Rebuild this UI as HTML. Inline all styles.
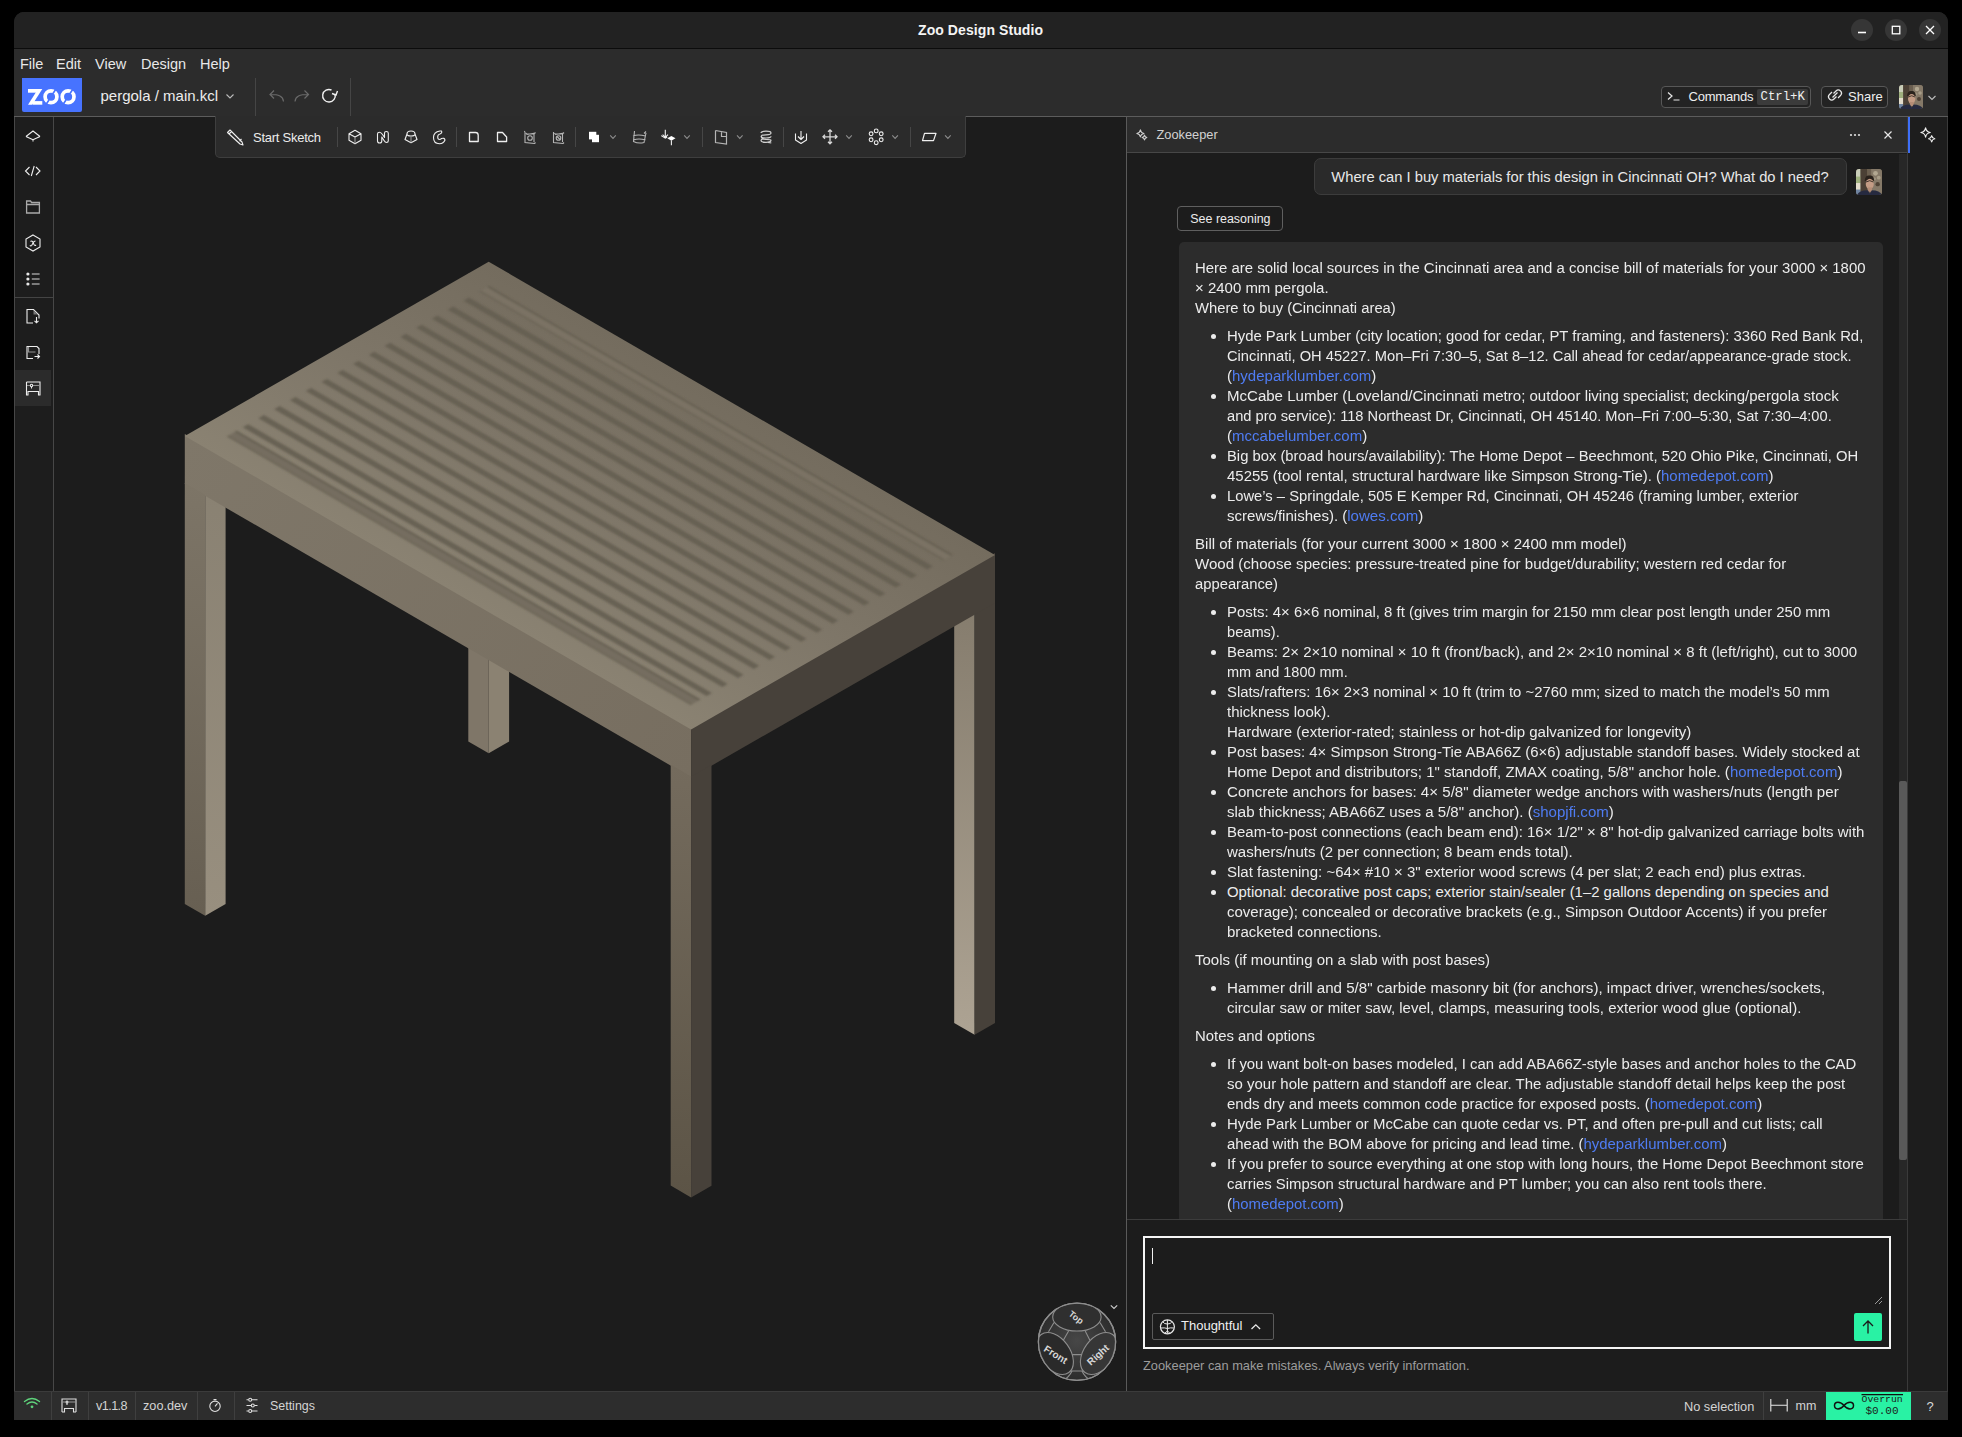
<!DOCTYPE html>
<html><head><meta charset="utf-8">
<style>
*{margin:0;padding:0;box-sizing:border-box}
html,body{width:1962px;height:1437px;background:#000;overflow:hidden;font-family:"Liberation Sans",sans-serif;color:#e6e6e6}
.a{position:absolute}
svg.a{overflow:visible}
.menu{position:absolute;top:56px;font-size:14.5px;color:#e8e8e8;line-height:16px}
.tdiv{position:absolute;background:#454545;width:1px}
.ic{position:absolute}
.st{position:absolute;top:1399px;font-size:13px;color:#d4d4d4;line-height:15px}
.sdiv{position:absolute;top:1392px;width:1px;height:28px;background:#3f3f3f}
.rt{position:absolute;left:1195px;font-size:14.9px;transform-origin:0 50%;line-height:20px;color:#ececec;white-space:nowrap}
.li{left:1227px}
.bul{position:absolute;left:1210.5px;width:5px;height:5px;border-radius:50%;background:#ececec}
.lk{color:#4f7cf3}
</style></head><body>

<!-- window base -->
<div class="a" style="left:14px;top:12px;width:1934px;height:1408px;background:#2c2c2c;border-radius:10px 10px 0 0"></div>
<div class="a" style="left:14px;top:12px;width:1934px;height:36px;background:#222222;border-radius:10px 10px 0 0"></div>
<div class="a" style="left:14px;top:47.5px;width:1934px;height:1.5px;background:#0c0c0c"></div>
<div class="a" style="left:918px;top:22px;font-size:14px;font-weight:bold;color:#f4f4f4;line-height:16px;letter-spacing:0.08px">Zoo Design Studio</div>
<div class="a" style="left:1851px;top:19px;width:22px;height:22px;border-radius:50%;background:#363636"></div>
<div class="a" style="left:1885px;top:19px;width:22px;height:22px;border-radius:50%;background:#363636"></div>
<div class="a" style="left:1919px;top:19px;width:22px;height:22px;border-radius:50%;background:#363636"></div>
<svg class="a" style="left:0;top:0" width="1962" height="60">
 <line x1="1858" y1="32.5" x2="1866" y2="32.5" stroke="#fff" stroke-width="1.6"/>
 <rect x="1892.3" y="26.3" width="7.5" height="7.5" fill="none" stroke="#fff" stroke-width="1.3"/>
 <path d="M1926 26 L1934 34 M1934 26 L1926 34" stroke="#fff" stroke-width="1.3"/>
</svg>
<!-- menus -->
<div class="menu" style="left:20px">File</div>
<div class="menu" style="left:56px">Edit</div>
<div class="menu" style="left:95px">View</div>
<div class="menu" style="left:141px">Design</div>
<div class="menu" style="left:200px">Help</div>
<!-- toolbar row -->
<svg class="a" style="left:22px;top:78px" width="60" height="34" viewBox="0 0 60 34">
 <path d="M0 0H60V32Q60 34 58 34H2Q0 34 0 32Z" fill="#4773ff"/>
 <path d="M6 11 H17 V14.7 H6 Z" fill="#fff"/><path d="M16 11 H20.3 L10.3 26.7 H6 Z" fill="#fff"/><path d="M10.8 23.1 H20.3 V26.7 H10.8 Z" fill="#fff"/>
 <circle cx="29" cy="18.8" r="5.9" fill="none" stroke="#fff" stroke-width="3.7"/>
 <circle cx="46.1" cy="18.8" r="5.9" fill="none" stroke="#fff" stroke-width="3.7"/>
 <path d="M34 11 L31 15.5 M24 26.5 L27 22 M51 11 L48 15.5 M41 26.5 L44 22" stroke="#4773ff" stroke-width="1.6"/>
</svg>
<div class="a" style="left:100.5px;top:87px;font-size:15px;color:#ececec;line-height:17px">pergola / main.kcl</div>
<svg class="a" style="left:0;top:60px" width="1962" height="60">
 <path d="M226.5 34.5 L230 38 L233.5 34.5" fill="none" stroke="#bbb" stroke-width="1.1"/>
 <path d="M283.5 41.5 C283 36 279 34.5 270 34.5 M274 30.5 L270 34.5 L274 38.5" fill="none" stroke="#6a6a6a" stroke-width="1.2"/>
 <path d="M295 41.5 C295.5 36 299.5 34.5 308.5 34.5 M304.5 30.5 L308.5 34.5 L304.5 38.5" fill="none" stroke="#6a6a6a" stroke-width="1.2"/>
 <path d="M335 34 A6.3 6.3 0 1 1 331.5 30" fill="none" stroke="#f0f0f0" stroke-width="1.4"/>
 <path d="M332 33.5 L336 35 L337.5 31" fill="none" stroke="#f0f0f0" stroke-width="1.4"/>
</svg>
<div class="tdiv" style="left:254.5px;top:78px;height:38px"></div>
<div class="tdiv" style="left:349.5px;top:78px;height:38px"></div>
<div class="a" style="left:14px;top:116px;width:1934px;height:1px;background:#5c5c5c"></div>
<!-- right top buttons -->
<div class="a" style="left:1661px;top:86px;width:150px;height:22px;border:1px solid #575757;border-radius:4px;background:#232323"></div>
<svg class="a" style="left:1660px;top:80px" width="30" height="30">
 <path d="M8 12.5 L12 16 L8 19.5 M13.5 20 H19.5" fill="none" stroke="#e8e8e8" stroke-width="1.2"/>
</svg>
<div class="a" style="left:1688.5px;top:89px;font-size:13px;color:#efefef;line-height:15px;letter-spacing:-0.2px">Commands</div>
<div class="a" style="left:1757px;top:89px;width:51px;height:16px;background:#3b3b3b;border-radius:2px"></div>
<div class="a" style="left:1760.5px;top:89.5px;font-family:'Liberation Mono',monospace;font-size:12.3px;color:#f0f0f0;line-height:15px">Ctrl+K</div>
<div class="a" style="left:1821px;top:86px;width:67px;height:22px;border:1px solid #575757;border-radius:4px;background:#232323"></div>
<svg class="a" style="left:1820px;top:80px" width="30" height="30">
 <path d="M13.5 13.5 L16 11 A3 3 0 0 1 20.5 15.5 L18 18 M16.5 16.5 L14 19 A3 3 0 0 1 9.5 14.5 L12 12 M12.5 17.5 L17.5 12.5" fill="none" stroke="#e8e8e8" stroke-width="1.2"/>
</svg>
<div class="a" style="left:1848px;top:89px;font-size:13px;color:#efefef;line-height:15px">Share</div>

<svg class="a" style="left:1899px;top:85px" width="24" height="24" viewBox="0 0 24 24"><defs><clipPath id="avc0"><rect x="0" y="0" width="24" height="24" rx="3"/></clipPath><filter id="avb0" x="-10%" y="-10%" width="120%" height="120%"><feGaussianBlur stdDeviation="0.55"/></filter></defs><g clip-path="url(#avc0)"><rect width="24" height="24" fill="#6b5f50"/><g filter="url(#avb0)"><rect x="0" y="0" width="4.2" height="24" fill="#c9cdb8"/><rect x="0" y="7" width="4.2" height="6" fill="#9fb07e"/><rect x="0" y="13" width="4.2" height="6" fill="#e3dccb"/><rect x="0" y="19" width="4.2" height="5" fill="#6f84a0"/><rect x="4.2" y="0" width="6" height="24" fill="#4b4034"/><rect x="14" y="0" width="10" height="24" fill="#857967"/><circle cx="18" cy="4" r="2.2" fill="#b2a791"/><circle cx="21" cy="8" r="1.8" fill="#a89d88"/><circle cx="17" cy="9" r="1.5" fill="#9c917d"/><circle cx="20" cy="14" r="2" fill="#4f4336"/><path d="M8 11 Q8.5 5.5 12.5 6 Q16.5 5.5 16.8 11 Z" fill="#2a221c"/><ellipse cx="12.7" cy="13.8" rx="3.7" ry="4.8" fill="#c49c85"/><path d="M9.3 12 Q12.7 9.5 16 12" fill="none" stroke="#2a221c" stroke-width="0.8"/><rect x="11" y="17" width="3.8" height="4" fill="#b48c76"/><path d="M1 24 Q2.5 19.5 11 19.5 L12.8 22.5 L14.6 19.5 Q22 19.5 24 24 Z" fill="#262c40"/></g></g>
</svg>
<svg class="a" style="left:1920px;top:85px" width="24" height="24"><path d="M8.5 11 L12 14.5 L15.5 11" fill="none" stroke="#bdbdbd" stroke-width="1.1"/></svg>

<!-- main area backgrounds -->
<div class="a" style="left:14px;top:117px;width:39px;height:1274px;background:#1d1d1d;border-left:1px solid #474747"></div>
<div class="a" style="left:53px;top:117px;width:1px;height:1274px;background:#474747"></div>
<div class="a" style="left:54px;top:117px;width:1072px;height:1274px;background:#1c1c1c"></div>
<div class="a" style="left:15px;top:296.5px;width:38px;height:1px;background:#444"></div>
<div class="a" style="left:15px;top:369.5px;width:36px;height:36px;background:#2b2b2b"></div>
<svg class="a" style="left:0;top:0" width="60" height="420">
 <g fill="none" stroke="#ededed" stroke-width="1.1">
  <path d="M26 136.5 L33 131 L40 136.5 M26 136.5 Q29 138 33 139.8 Q37 138 40 136.5 M33 139.8 V141.5"/>
  <path d="M29.5 167 L25.5 171 L29.5 175 M36 167 L40 171 L36 175 M34.2 166 L31.3 176"/>
  <path d="M27 228.5" />
  <path d="M33 235 L40 239 V247 L33 251 L26 247 V239 Z"/>
  <path d="M30.5 241.5 Q31.5 240.5 32.5 241.5 L34 244.5 Q35 246 36 245 M35.5 241 Q34 241 33 243 L31.8 245.2 Q31 246.3 29.8 245.6"/>
 </g>
 <path d="M26.6 201 H30.5 L31.6 202.5 H39.4 V213 H26.6 Z M26.6 204.5 H39.4" fill="none" stroke="#a9a9a9" stroke-width="1.3"/>
 <g fill="#e8e8e8"><circle cx="27.9" cy="274" r="1.6"/><circle cx="27.9" cy="279" r="1.6"/><circle cx="27.9" cy="284" r="1.6"/></g>
 <g stroke="#9a9a9a" stroke-width="1.3"><path d="M31.8 274H39.6M31.8 279H39.6M31.8 284H39.6"/></g>
 <g fill="none" stroke="#ededed" stroke-width="1.1">
  <path d="M33 323 H27 V309.5 H33.5 L39 315 V318.5"/>
  <path d="M36.5 317 V322.8 M34.5 320.8 L36.5 322.8 L38.5 320.8"/>
  <path d="M33 358.5 H27 V346.5 H37 L39 348.5 V354"/>
  <path d="M34.5 356.5 H39.5 M37.5 354.5 L39.5 356.5 L37.5 358.5"/>
  <path d="M26.5 382 H40 V395 M26.5 382 V395 M28 395 V391.5 H38.5 V395 M26 395 H28.5 M38 395 H40.5"/>
  <circle cx="31.5" cy="385.5" r="1.2"/><path d="M31.5 386.7 V388.5"/>
 </g>
 <path d="M28.5 347 V352 H35.5" fill="none" stroke="#8f8f8f" stroke-width="1.2"/>
 <path d="M33.5 310 L38 314.5 H33.5 Z" fill="#777"/>
 <path d="M27 385.5 H30 M33 385.5 H39.5" stroke="#8f8f8f" stroke-width="1.2"/>
</svg>
<!-- panel bg -->
<div class="a" style="left:1126px;top:117px;width:1px;height:1274px;background:#5a5a5a"></div>
<div class="a" style="left:1127px;top:117px;width:780px;height:1274px;background:#1c1c1c"></div>
<div class="a" style="left:1907px;top:117px;width:1px;height:1274px;background:#3a3a3a"></div>
<div class="a" style="left:1908px;top:117px;width:39px;height:1274px;background:#1d1d1d"></div>
<div class="a" style="left:1946.5px;top:117px;width:1px;height:1274px;background:#3a3a3a"></div>
<div class="a" style="left:1908px;top:117px;width:2.2px;height:36px;background:#3e6ff7"></div>
<svg class="a" style="left:1908px;top:117px" width="40" height="40"><g fill="none" stroke="#f0f0f0" stroke-width="1.15" stroke-linejoin="round"><path d="M17.60 10.80 Q18.26 14.84 22.30 15.50 Q18.26 16.16 17.60 20.20 Q16.94 16.16 12.90 15.50 Q16.94 14.84 17.60 10.80 Z"/><path d="M23.70 18.70 Q24.20 21.30 26.80 21.80 Q24.20 22.30 23.70 24.90 Q23.20 22.30 20.60 21.80 Q23.20 21.30 23.70 18.70 Z"/></g></svg>

<!-- viewport -->

<svg class="a" style="left:0;top:0" width="1962" height="1437" viewBox="0 0 1962 1437"><defs><linearGradient id="gtop" gradientUnits="userSpaceOnUse" x1="438" y1="583" x2="590" y2="320"><stop offset="0" stop-color="#8a8272"/><stop offset="0.5" stop-color="#7e7668"/><stop offset="1" stop-color="#746c5e"/></linearGradient><linearGradient id="glf" gradientUnits="userSpaceOnUse" x1="185" y1="436" x2="691" y2="778"><stop offset="0" stop-color="#7f7769"/><stop offset="1" stop-color="#776e60"/></linearGradient><linearGradient id="glpost" gradientUnits="userSpaceOnUse" x1="0" y1="484" x2="0" y2="916"><stop offset="0" stop-color="#7d7567"/><stop offset="1" stop-color="#675f52"/></linearGradient><linearGradient id="glpost2" gradientUnits="userSpaceOnUse" x1="0" y1="480" x2="0" y2="916"><stop offset="0" stop-color="#898172"/><stop offset="1" stop-color="#988f7f"/></linearGradient><linearGradient id="gfpost" gradientUnits="userSpaceOnUse" x1="0" y1="766" x2="0" y2="1198"><stop offset="0" stop-color="#746b5d"/><stop offset="1" stop-color="#5c5446"/></linearGradient><linearGradient id="grpost" gradientUnits="userSpaceOnUse" x1="0" y1="615" x2="0" y2="1035"><stop offset="0" stop-color="#867d6e"/><stop offset="1" stop-color="#ada393"/></linearGradient><filter id="blur1" x="-5%" y="-5%" width="110%" height="110%"><feGaussianBlur stdDeviation="1.25"/></filter></defs><polygon points="468.3,273.4 488.7,285.2 488.7,753.2 468.3,741.4" fill="#7f7668"/><polygon points="488.7,285.2 509.1,273.5 509.1,741.5 488.7,753.2" fill="#8b8272"/><polygon points="954.2,555.0 974.6,566.8 974.6,1034.8 954.2,1023.0" fill="url(#grpost)"/><polygon points="974.6,566.8 995.0,555.1 995.0,1023.1 974.6,1034.8" fill="#47413a"/><polygon points="205.2,447.8 225.6,436.1 225.6,904.1 205.2,915.8" fill="url(#glpost2)"/><polygon points="184.8,434.0 691.1,727.4 691.1,777.4 184.8,484.0" fill="url(#glf)"/><polygon points="691.1,727.4 995.0,553.1 995.0,603.1 691.1,777.4" fill="#47413a"/><polygon points="184.8,483.0 205.2,494.8 205.2,915.8 184.8,904.0" fill="url(#glpost)"/><polygon points="670.7,764.6 691.1,776.4 691.1,1197.4 670.7,1185.6" fill="url(#gfpost)"/><polygon points="691.1,776.4 711.5,764.7 711.5,1185.7 691.1,1197.4" fill="#47413a"/><polygon points="184.8,436.0 691.1,729.4 995.0,555.1 488.7,261.7" fill="url(#gtop)"/><g filter="url(#blur1)" opacity="0.9"><polygon points="226.9,436.4 690.7,705.1 700.4,699.5 236.6,430.8" fill="#736c5e"/><polygon points="234.8,431.8 698.6,700.6 700.4,699.5 236.6,430.8" fill="#625b4e"/><polygon points="226.9,436.4 690.7,705.1 692.2,704.2 228.4,435.5" fill="#6a6355"/><polygon points="242.7,427.3 706.5,696.1 711.9,692.9 248.2,424.2" fill="#655e51"/><polygon points="258.5,418.3 722.2,687.0 727.7,683.9 263.9,415.1" fill="#655e51"/><polygon points="274.2,409.2 738.0,678.0 743.5,674.8 279.7,406.1" fill="#655e51"/><polygon points="290.0,400.2 753.8,668.9 759.2,665.8 295.5,397.0" fill="#655e51"/><polygon points="305.8,391.1 769.5,659.9 775.0,656.8 311.2,388.0" fill="#655e51"/><polygon points="321.5,382.1 785.3,650.8 790.8,647.7 327.0,379.0" fill="#655e51"/><polygon points="337.3,373.0 801.1,641.8 806.6,638.7 342.8,369.9" fill="#655e51"/><polygon points="353.1,364.0 816.9,632.8 822.3,629.6 358.6,360.9" fill="#655e51"/><polygon points="368.9,355.0 832.6,623.7 838.1,620.6 374.3,351.8" fill="#655e51"/><polygon points="384.6,345.9 848.4,614.7 853.9,611.5 390.1,342.8" fill="#655e51"/><polygon points="400.4,336.9 864.2,605.6 869.6,602.5 405.9,333.7" fill="#655e51"/><polygon points="416.2,327.8 880.0,596.6 885.4,593.4 421.7,324.7" fill="#655e51"/><polygon points="432.0,318.8 895.7,587.5 901.2,584.4 437.4,315.6" fill="#655e51"/><polygon points="447.7,309.7 911.5,578.5 917.0,575.3 453.2,306.6" fill="#655e51"/><polygon points="463.5,300.7 927.3,569.4 932.7,566.3 469.0,297.5" fill="#655e51"/><polygon points="479.3,291.6 943.0,560.4 952.8,554.8 489.0,286.0" fill="#7b7365"/><polygon points="487.2,287.1 950.9,555.8 952.8,554.8 489.0,286.0" fill="#625b4e"/><polygon points="479.3,291.6 943.0,560.4 944.6,559.5 480.8,290.8" fill="#6a6355"/></g></svg>
<!-- floating toolbar -->
<div class="a" style="left:215px;top:116px;width:751px;height:42px;background:#2b2b2b;border:1px solid #3e3e3e;border-top:none;border-radius:0 0 5px 5px"></div>
<div class="a" style="left:253px;top:129.5px;font-size:13px;color:#ececec;line-height:15px;letter-spacing:-0.25px">Start Sketch</div>
<div class="tdiv" style="left:337px;top:127px;height:20px;background:#464646"></div>
<div class="tdiv" style="left:456px;top:127px;height:20px;background:#464646"></div>
<div class="tdiv" style="left:575px;top:127px;height:20px;background:#464646"></div>
<div class="tdiv" style="left:702px;top:127px;height:20px;background:#464646"></div>
<div class="tdiv" style="left:783px;top:127px;height:20px;background:#464646"></div>
<div class="tdiv" style="left:910px;top:127px;height:20px;background:#464646"></div>
<svg class="a" style="left:0;top:0" width="970" height="160">
 <g fill="none" stroke="#efefef" stroke-width="1.1" stroke-linejoin="round">
  <!-- pencil -->
  <path d="M227.5 132.5 L230 130 L242 142 L243 145 L240 144 Z M229 134 L231.5 131.5 M239.5 141 L241.5 139"/>
  <!-- extrude cube -->
  <path d="M355 130.3 L361 133.7 V140.3 L355 143.7 L349 140.3 V133.7 Z M349 133.7 L355 137 L361 133.7"/>
  <!-- sweep -->
  <path d="M377.5 134 Q377.5 132.2 379.5 132.2 Q381 132.2 382.5 134.5 L384.5 137.5 V133 Q384.5 131.5 386.3 131.5 Q388.3 131.5 388.3 133.2 V140.8 Q388.3 142.5 386.5 142.5 Q385.2 142.5 384 140.5 L381.8 137 V141 Q381.8 143 379.7 143 Q377.5 143 377.5 141 Z"/>
  <!-- loft -->
  <path d="M407 134 Q407 131 411 131 Q415 131 415 134 L417 139.5 L411 142.8 L405 139.5 Z M407 134 Q407 136 411 136 Q415 136 415 134"/>
  <!-- revolve -->
  <path d="M440 131 Q433.5 132 433.5 137.5 Q433.5 143.7 439.5 143.7 Q443.5 143.7 445 140 Q444.5 137.5 441.5 138.5 Q440.5 139.5 439.5 139.5 Q437.7 139.5 437.7 137 Q437.7 134.5 440 134 Q442.5 133 441.5 131 Z"/>
  <!-- fillet -->
  <path d="M469.5 132.5 H475.5 Q478.2 132.5 478.2 135.2 V141.5 H469.5 Z" stroke-width="1.3"/>
  <!-- chamfer -->
  <path d="M497.5 132.5 H502.5 L506.6 137 V141.5 H497.5 Z" stroke-width="1.3"/>
  <!-- insert -->
  <path d="M795.5 133.5 V140 L801 143.5 L806.5 140 V133.5 M801 131 V139 M798 136.5 L801 139.5 L804 136.5"/>
  <!-- parallelogram -->
  <path d="M924.5 133.3 H936 L933.5 140.6 H922.5 Z" stroke-width="1.2"/>
 </g>
 <g fill="none" stroke="#b5b5b5" stroke-width="1.1">
  <path d="M355 137 V143.5" stroke="#9a9a9a"/>
  <path d="M411 136 V142.5" stroke="#9a9a9a"/>
  <!-- shell -->
  <path d="M525 132 V142.5 L534.5 143.5 M525 132 L524.3 131 M534.5 143.5 L535.5 142.5 M526.5 134 H534 V142 M526 133 L527 134.5 L535.5 133 M535.5 132.5 L534 134"/>
  <circle cx="530" cy="138" r="2.3"/>
  <!-- hole -->
  <path d="M553.5 132 V142.5 L563 143.5 M563 143.5 L564 142.5 M555 134 H562.5 V142 M554.5 133 L555.5 134.5 L564 133 M564 132.5 L562.5 134"/>
  <circle cx="558.5" cy="138" r="2.3"/><path d="M557 136.5 L560 139.5"/>
  <!-- offset plane -->
  <path d="M633 136 Q638 134 645.5 136 M633.5 140 Q638.5 138 645.5 140 M634.5 131 L633.5 141.5 Q638.5 144 644 142.5 L646 133 M644 133.5 L646 131.5"/>
  <!-- sweep2 -->
  <path d="M715.5 130.5 V142.5 L726.5 144 V132.5 L715.5 130.5 M721.5 131.5 V136.5 H726.5" stroke-width="1.2"/>
  <!-- helix -->
  <g stroke="#d0d0d0" stroke-width="1.2" fill="none">
  <path d="M761 133 Q761 131.2 766 131.2 Q771 131.2 771 133 Q771 134.8 766 134.8 Q761.5 134.8 761.3 136.2 Q761.3 138 766 138 Q771 138 771 136.3"/>
  <path d="M761.3 136.3 Q761 139.2 766 139.4 Q771 139.4 771 140.3 Q771 142.3 766 142.3 Q761 142.3 761 140.5 Q761 139 764 138.8"/>
  <path d="M768 142.3 L771.3 143"/>
  </g>
  <!-- move -->
  <path d="M830 129.8 V143.8 M823 136.8 H837 M828 131.8 L830 129.8 L832 131.8 M828 141.8 L830 143.8 L832 141.8 M825 134.8 L823 136.8 L825 138.8 M835 134.8 L837 136.8 L835 138.8" stroke="#d8d8d8" stroke-width="1.3"/>
 </g>
 <!-- boolean -->
 <rect x="589" y="131.8" width="7.3" height="7.6" fill="#fff"/><rect x="592" y="134.8" width="7" height="7.4" fill="#fff"/>
 <!-- point plane -->
 <g fill="none" stroke="#f0f0f0" stroke-width="1.1">
  <path d="M665.3 129.8 V137.3 M662.6 134.6 L665.3 137.3 L668 134.6 M661.2 135.6 L665.3 138.2 L667.2 137"/>
  <path d="M671.4 140.5 V145.2"/>
 </g>
 <path d="M667.3 138.3 L671.4 135.9 L675.5 138.3 L671.4 140.7 Z" fill="#fff"/>
 <!-- pattern -->
 <g fill="none" stroke="#f0f0f0" stroke-width="1.1">
  <circle cx="876.2" cy="130.9" r="1.9"/><circle cx="881.2" cy="133.8" r="1.9"/><circle cx="881.2" cy="139.8" r="1.9"/><circle cx="876.2" cy="142.7" r="1.9"/>
  <circle cx="871.1" cy="139.8" r="1.9"/><circle cx="871.1" cy="133.8" r="1.9"/>
 </g>
 <!-- chevrons -->
 <g fill="none" stroke="#8c8c8c" stroke-width="1.1">
  <path d="M610.2 135.4 L613 138.4 L615.8 135.4"/>
  <path d="M684.2 135.4 L687 138.4 L689.8 135.4"/>
  <path d="M737 135.4 L739.8 138.4 L742.6 135.4"/>
  <path d="M846.2 135.4 L849 138.4 L851.8 135.4"/>
  <path d="M892.3 135.4 L895.1 138.4 L897.9 135.4"/>
  <path d="M945.1 135.4 L947.9 138.4 L950.7 135.4"/>
 </g>
</svg>

<!-- nav cube -->
<svg class="a" style="left:1030px;top:1295px" width="100" height="95" viewBox="1030 1295 100 95">
 <defs><clipPath id="ncc"><circle cx="1077" cy="1341.8" r="38.6"/></clipPath><radialGradient id="ncg" cx="1077" cy="1341" r="40" gradientUnits="userSpaceOnUse"><stop offset="0" stop-color="#474747"/><stop offset="1" stop-color="#2c2c2c"/></radialGradient></defs>
 <circle cx="1077" cy="1341.8" r="38.6" fill="url(#ncg)" stroke="#8d8d8d" stroke-width="1.3"/>
 <g clip-path="url(#ncc)"><g fill="none" stroke="#8d8d8d" stroke-width="1.1">
  <path d="M1048.5 1331.8 L1054 1322.5 M1068.6 1331 L1063.2 1340.5 M1085.2 1331 L1090 1340.5 M1105.5 1331.8 L1100 1322.5"/>
  <path d="M1069.3 1354.6 H1084.5 M1070 1371 H1084"/>
  <path d="M1072 1371 Q1068 1380 1058 1382"/>
  <path d="M1082 1371 Q1086 1380 1096 1382"/>
 </g>
 <ellipse cx="1076.9" cy="1317" rx="24.2" ry="14" fill="#2f2f2f" stroke="#8d8d8d" stroke-width="1.1"/>
 <ellipse cx="1055" cy="1353.5" rx="15" ry="23.5" transform="rotate(-36 1055 1353.5)" fill="#2a2a2a" stroke="#8d8d8d" stroke-width="1.1"/>
 <ellipse cx="1098.8" cy="1353.5" rx="15" ry="23.5" transform="rotate(36 1098.8 1353.5)" fill="#363636" stroke="#8d8d8d" stroke-width="1.1"/>
 </g><circle cx="1077" cy="1341.8" r="38.6" fill="none" stroke="#8d8d8d" stroke-width="1.3"/>
 <g font-family="Liberation Sans" font-weight="bold" fill="#d6d6d6" text-anchor="middle">
  <text x="1076.4" y="1320.5" font-size="9" transform="rotate(38 1076.4 1317.1)">Top</text>
  <text x="1055.8" y="1358" font-size="10" transform="rotate(32 1055.8 1354.4)">Front</text>
  <text x="1097.9" y="1358.3" font-size="10" transform="rotate(-42 1097.9 1354.7)">Right</text>
 </g>
 <path d="M1110.8 1305.3 L1114 1308.5 L1117.2 1305.3" fill="none" stroke="#cfcfcf" stroke-width="1.1"/>
</svg>

<div class="a" style="left:1127px;top:117px;width:780px;height:36px;background:#2c2c2c;border-bottom:1px solid #474747"></div>
<svg class="a" style="left:1127px;top:117px" width="40" height="36"><g fill="none" stroke="#d0d0d0" stroke-width="1.05" stroke-linejoin="round"><path d="M13.40 12.80 Q13.90 15.90 17.00 16.40 Q13.90 16.90 13.40 20.00 Q12.90 16.90 9.80 16.40 Q12.90 15.90 13.40 12.80 Z"/><path d="M17.50 18.10 Q17.88 20.12 19.90 20.50 Q17.88 20.88 17.50 22.90 Q17.12 20.88 15.10 20.50 Q17.12 20.12 17.50 18.10 Z"/></g></svg>
<div class="a" style="left:1156.5px;top:126.8px;font-size:12.8px;color:#d2d2d2;line-height:15px">Zookeeper</div>
<svg class="a" style="left:1840px;top:120px" width="60" height="30"><g fill="#e0e0e0"><circle cx="11" cy="15" r="1.1"/><circle cx="15" cy="15" r="1.1"/><circle cx="19" cy="15" r="1.1"/></g><path d="M44.5 11.5 L51.5 18.5 M51.5 11.5 L44.5 18.5" stroke="#e8e8e8" stroke-width="1.2"/></svg>
<div class="a" style="left:1127px;top:154px;width:780px;height:1065px;overflow:hidden">
<div class="a" style="left:772px;top:0;width:8px;height:1065px;background:#272727"></div>
<div class="a" style="left:772px;top:626.5px;width:8px;height:379.29999999999995px;background:#595959;border-radius:2px"></div>
<div class="a" style="left:187px;top:4.300000000000011px;width:532.8px;height:37.19999999999999px;background:#2a2a2a;border:1px solid #3c3c3c;border-radius:7px"></div>
<div class="a" style="left:204.29999999999995px;top:12.900000000000006px;font-size:14.73px;line-height:20px;color:#e8e8e8;white-space:nowrap">Where can I buy materials for this design in Cincinnati OH? What do I need?</div>
<svg class="a" style="left:729px;top:14.800000000000011px" width="26" height="26" viewBox="0 0 24 24"><defs><clipPath id="avc"><rect x="0" y="0" width="24" height="24" rx="3"/></clipPath><filter id="avb" x="-10%" y="-10%" width="120%" height="120%"><feGaussianBlur stdDeviation="0.55"/></filter></defs><g clip-path="url(#avc)"><rect width="24" height="24" fill="#6b5f50"/><g filter="url(#avb)"><rect x="0" y="0" width="4.2" height="24" fill="#c9cdb8"/><rect x="0" y="7" width="4.2" height="6" fill="#9fb07e"/><rect x="0" y="13" width="4.2" height="6" fill="#e3dccb"/><rect x="0" y="19" width="4.2" height="5" fill="#6f84a0"/><rect x="4.2" y="0" width="6" height="24" fill="#4b4034"/><rect x="14" y="0" width="10" height="24" fill="#857967"/><circle cx="18" cy="4" r="2.2" fill="#b2a791"/><circle cx="21" cy="8" r="1.8" fill="#a89d88"/><circle cx="17" cy="9" r="1.5" fill="#9c917d"/><circle cx="20" cy="14" r="2" fill="#4f4336"/><path d="M8 11 Q8.5 5.5 12.5 6 Q16.5 5.5 16.8 11 Z" fill="#2a221c"/><ellipse cx="12.7" cy="13.8" rx="3.7" ry="4.8" fill="#c49c85"/><path d="M9.3 12 Q12.7 9.5 16 12" fill="none" stroke="#2a221c" stroke-width="0.8"/><rect x="11" y="17" width="3.8" height="4" fill="#b48c76"/><path d="M1 24 Q2.5 19.5 11 19.5 L12.8 22.5 L14.6 19.5 Q22 19.5 24 24 Z" fill="#262c40"/></g></g>
</svg>
<div class="a" style="left:50.299999999999955px;top:52.30000000000001px;width:106px;height:25px;border:1px solid #5f5f5f;border-radius:4px"></div>
<div class="a" style="left:63.299999999999955px;top:58px;font-size:12.44px;line-height:15px;color:#ececec;white-space:nowrap">See reasoning</div>
<div class="a" style="left:52px;top:88px;width:704px;height:1200px;background:#2c2c2c;border-radius:5px"></div>
<div class="rt" style="left:68px;top:104.4px;transform:scaleX(1.0019)">Here are solid local sources in the Cincinnati area and a concise bill of materials for your 3000 × 1800</div>
<div class="rt" style="left:68px;top:124.4px;transform:scaleX(1.0056)">× 2400 mm pergola.</div>
<div class="rt" style="left:68px;top:144.4px;transform:scaleX(0.9943)">Where to buy (Cincinnati area)</div>
<div class="rt" style="left:100px;top:172.4px;transform:scaleX(0.9988)">Hyde Park Lumber (city location; good for cedar, PT framing, and fasteners): 3360 Red Bank Rd,</div>
<div class="bul" style="left:83.79999999999995px;top:180.2px"></div>
<div class="rt" style="left:100px;top:192.4px;transform:scaleX(0.9864)">Cincinnati, OH 45227. Mon–Fri 7:30–5, Sat 8–12. Call ahead for cedar/appearance-grade stock.</div>
<div class="rt" style="left:100px;top:212.4px;transform:scaleX(1.0077)">(<span class="lk">hydeparklumber.com</span>)</div>
<div class="rt" style="left:100px;top:232.4px;transform:scaleX(1.0096)">McCabe Lumber (Loveland/Cincinnati metro; outdoor living specialist; decking/pergola stock</div>
<div class="bul" style="left:83.79999999999995px;top:240.2px"></div>
<div class="rt" style="left:100px;top:252.4px;transform:scaleX(0.9837)">and pro service): 118 Northeast Dr, Cincinnati, OH 45140. Mon–Fri 7:00–5:30, Sat 7:30–4:00.</div>
<div class="rt" style="left:100px;top:272.4px;transform:scaleX(1.0083)">(<span class="lk">mccabelumber.com</span>)</div>
<div class="rt" style="left:100px;top:292.4px;transform:scaleX(0.9934)">Big box (broad hours/availability): The Home Depot – Beechmont, 520 Ohio Pike, Cincinnati, OH</div>
<div class="bul" style="left:83.79999999999995px;top:300.2px"></div>
<div class="rt" style="left:100px;top:312.4px;transform:scaleX(1.0059)">45255 (tool rental, structural hardware like Simpson Strong-Tie). (<span class="lk">homedepot.com</span>)</div>
<div class="rt" style="left:100px;top:332.4px;transform:scaleX(0.9922)">Lowe’s – Springdale, 505 E Kemper Rd, Cincinnati, OH 45246 (framing lumber, exterior</div>
<div class="bul" style="left:83.79999999999995px;top:340.2px"></div>
<div class="rt" style="left:100px;top:352.4px;transform:scaleX(1.0094)">screws/finishes). (<span class="lk">lowes.com</span>)</div>
<div class="rt" style="left:68px;top:380.4px;transform:scaleX(1.0106)">Bill of materials (for your current 3000 × 1800 × 2400 mm model)</div>
<div class="rt" style="left:68px;top:400.4px;transform:scaleX(1.0122)">Wood (choose species: pressure-treated pine for budget/durability; western red cedar for</div>
<div class="rt" style="left:68px;top:420.4px;transform:scaleX(0.9925)">appearance)</div>
<div class="rt" style="left:100px;top:448.4px;transform:scaleX(1.004)">Posts: 4× 6×6 nominal, 8 ft (gives trim margin for 2150 mm clear post length under 250 mm</div>
<div class="bul" style="left:83.79999999999995px;top:456.2px"></div>
<div class="rt" style="left:100px;top:468.4px;transform:scaleX(0.9815)">beams).</div>
<div class="rt" style="left:100px;top:488.4px;transform:scaleX(1.0069)">Beams: 2× 2×10 nominal × 10 ft (front/back), and 2× 2×10 nominal × 8 ft (left/right), cut to 3000</div>
<div class="bul" style="left:83.79999999999995px;top:496.2px"></div>
<div class="rt" style="left:100px;top:508.4px;transform:scaleX(0.9723)">mm and 1800 mm.</div>
<div class="rt" style="left:100px;top:528.4px;transform:scaleX(0.9977)">Slats/rafters: 16× 2×3 nominal × 10 ft (trim to ~2760 mm; sized to match the model’s 50 mm</div>
<div class="bul" style="left:83.79999999999995px;top:536.2px"></div>
<div class="rt" style="left:100px;top:548.4px;transform:scaleX(1.0085)">thickness look).</div>
<div class="rt" style="left:100px;top:568.4px;transform:scaleX(1.0088)">Hardware (exterior-rated; stainless or hot-dip galvanized for longevity)</div>
<div class="rt" style="left:100px;top:588.4px;transform:scaleX(1.0043)">Post bases: 4× Simpson Strong-Tie ABA66Z (6×6) adjustable standoff bases. Widely stocked at</div>
<div class="bul" style="left:83.79999999999995px;top:596.2px"></div>
<div class="rt" style="left:100px;top:608.4px;transform:scaleX(1.0068)">Home Depot and distributors; 1" standoff, ZMAX coating, 5/8" anchor hole. (<span class="lk">homedepot.com</span>)</div>
<div class="rt" style="left:100px;top:628.4px;transform:scaleX(1.0139)">Concrete anchors for bases: 4× 5/8" diameter wedge anchors with washers/nuts (length per</div>
<div class="bul" style="left:83.79999999999995px;top:636.2px"></div>
<div class="rt" style="left:100px;top:648.4px;transform:scaleX(1.0107)">slab thickness; ABA66Z uses a 5/8" anchor). (<span class="lk">shopjfi.com</span>)</div>
<div class="rt" style="left:100px;top:668.4px;transform:scaleX(1.0069)">Beam-to-post connections (each beam end): 16× 1/2" × 8" hot-dip galvanized carriage bolts with</div>
<div class="bul" style="left:83.79999999999995px;top:676.2px"></div>
<div class="rt" style="left:100px;top:688.4px;transform:scaleX(1.0088)">washers/nuts (2 per connection; 8 beam ends total).</div>
<div class="rt" style="left:100px;top:708.4px;transform:scaleX(1.009)">Slat fastening: ~64× #10 × 3" exterior wood screws (4 per slat; 2 each end) plus extras.</div>
<div class="bul" style="left:83.79999999999995px;top:716.2px"></div>
<div class="rt" style="left:100px;top:728.4px;transform:scaleX(1.0)">Optional: decorative post caps; exterior stain/sealer (1–2 gallons depending on species and</div>
<div class="bul" style="left:83.79999999999995px;top:736.2px"></div>
<div class="rt" style="left:100px;top:748.4px;transform:scaleX(1.0082)">coverage); concealed or decorative brackets (e.g., Simpson Outdoor Accents) if you prefer</div>
<div class="rt" style="left:100px;top:768.4px;transform:scaleX(1.0108)">bracketed connections.</div>
<div class="rt" style="left:68px;top:796.4px;transform:scaleX(1.0072)">Tools (if mounting on a slab with post bases)</div>
<div class="rt" style="left:100px;top:824.4px;transform:scaleX(1.0145)">Hammer drill and 5/8" carbide masonry bit (for anchors), impact driver, wrenches/sockets,</div>
<div class="bul" style="left:83.79999999999995px;top:832.2px"></div>
<div class="rt" style="left:100px;top:844.4px;transform:scaleX(1.0057)">circular saw or miter saw, level, clamps, measuring tools, exterior wood glue (optional).</div>
<div class="rt" style="left:68px;top:872.4px;transform:scaleX(0.9996)">Notes and options</div>
<div class="rt" style="left:100px;top:900.4px;transform:scaleX(0.999)">If you want bolt-on bases modeled, I can add ABA66Z-style bases and anchor holes to the CAD</div>
<div class="bul" style="left:83.79999999999995px;top:908.2px"></div>
<div class="rt" style="left:100px;top:920.4px;transform:scaleX(1.0064)">so your hole pattern and standoff are clear. The adjustable standoff detail helps keep the post</div>
<div class="rt" style="left:100px;top:940.4px;transform:scaleX(1.0072)">ends dry and meets common code practice for exposed posts. (<span class="lk">homedepot.com</span>)</div>
<div class="rt" style="left:100px;top:960.4px;transform:scaleX(1.0021)">Hyde Park Lumber or McCabe can quote cedar vs. PT, and often pre-pull and cut lists; call</div>
<div class="bul" style="left:83.79999999999995px;top:968.2px"></div>
<div class="rt" style="left:100px;top:980.4px;transform:scaleX(1.0016)">ahead with the BOM above for pricing and lead time. (<span class="lk">hydeparklumber.com</span>)</div>
<div class="rt" style="left:100px;top:1000.4px;transform:scaleX(1.0057)">If you prefer to source everything at one stop with long hours, the Home Depot Beechmont store</div>
<div class="bul" style="left:83.79999999999995px;top:1008.2px"></div>
<div class="rt" style="left:100px;top:1020.4px;transform:scaleX(1.0006)">carries Simpson structural hardware and PT lumber; you can also rent tools there.</div>
<div class="rt" style="left:100px;top:1040.4px;transform:scaleX(0.9998)">(<span class="lk">homedepot.com</span>)</div>
</div>
<div class="a" style="left:1127px;top:1219px;width:780px;height:1px;background:#3c3c3c"></div>
<div class="a" style="left:1143px;top:1236px;width:748px;height:113px;border:2px solid #f5f5f5;background:#1c1c1c"></div>
<div class="a" style="left:1152px;top:1248px;width:1.2px;height:15.5px;background:#f0f0f0"></div>
<svg class="a" style="left:1870px;top:1292px" width="16" height="16"><path d="M5 12 L12 5 M9 12 L12 9" stroke="#9a9a9a" stroke-width="1"/></svg>
<div class="a" style="left:1152.2px;top:1313.3px;width:122.3px;height:27.2px;border:1px solid #5a5a5a;border-radius:2px;background:#1c1c1c"></div>
<svg class="a" style="left:1155px;top:1316px" width="120" height="22"><circle cx="12.4" cy="10.8" r="7" fill="none" stroke="#e8e8e8" stroke-width="1.2"/><path d="M12.4 4 V17.5 M12.4 8 Q9 8 8 6 M12.4 8 Q15.8 8 16.8 6 M12.4 12.5 Q9.5 11.5 6 12 M12.4 12.5 Q15.3 11.5 18.8 12 M12.4 15 L10 17 M12.4 15 L14.8 17" fill="none" stroke="#e8e8e8" stroke-width="1"/><path d="M96.5 13 L100.8 8.8 L105.1 13" fill="none" stroke="#e8e8e8" stroke-width="1.3"/></svg>
<div class="a" style="left:1181px;top:1318px;font-size:13px;line-height:15px;color:#f0f0f0">Thoughtful</div>
<div class="a" style="left:1854px;top:1313px;width:28px;height:28px;background:#29f2a4;border-radius:2px"></div>
<svg class="a" style="left:1854px;top:1313px" width="28" height="28"><path d="M14 20.5 V8 M9 13 L14 8 L19 13" fill="none" stroke="#1a1a1a" stroke-width="1.3"/></svg>
<div class="a" style="left:1143px;top:1358.4px;font-size:12.83px;line-height:15px;color:#9c9c9c;white-space:nowrap">Zookeeper can make mistakes. Always verify information.</div>
<!-- status bar -->
<div class="a" style="left:14px;top:1391px;width:1934px;height:29px;background:#2d2d2d;border-top:1px solid #3b3b3b"></div>
<div class="sdiv" style="left:50.5px"></div>
<div class="sdiv" style="left:87.5px"></div>
<div class="sdiv" style="left:134.5px"></div>
<div class="sdiv" style="left:196.5px"></div>
<div class="sdiv" style="left:233.5px"></div>
<div class="sdiv" style="left:1762.5px"></div>
<svg class="a" style="left:0;top:1380px" width="330" height="40">
 <g fill="none" stroke="#5fd47c" stroke-width="1.4" stroke-linecap="round">
  <path d="M24.5 21.5 Q32 15.5 39.5 21.5"/><path d="M27 24 Q32 20 37 24"/>
 </g>
 <circle cx="32" cy="26.8" r="1.4" fill="#5fd47c"/>
 <g fill="none" stroke="#e0e0e0" stroke-width="1.1">
  <path d="M62 32 V19 H76 V32 M62 32 H64.5 V28.5 H73.5 V32 H76"/>
  <circle cx="67" cy="22" r="1"/><path d="M67 23 V25"/>
  <path d="M62.5 22 H66 M68 22 H75.5" stroke="#9a9a9a"/>
  <circle cx="215" cy="26.3" r="5.2"/><path d="M215 26.3 L217.5 23.3 M213.5 19.6 H216.5"/>
  <path d="M246.5 19.8 H248.5 M252 19.8 H257.5 M246.5 25.5 H251 M254.5 25.5 H257.5 M246.5 31 H248.5 M252 31 H257.5"/>
  <circle cx="250.2" cy="19.8" r="1.5"/><circle cx="252.8" cy="25.5" r="1.5"/><circle cx="250.2" cy="31" r="1.5"/>
 </g>
</svg>
<div class="st" style="left:96px;letter-spacing:-0.55px;font-size:12.6px">v1.1.8</div>
<div class="st" style="left:143px;font-size:12.7px">zoo.dev</div>
<div class="st" style="left:270px;font-size:12.45px">Settings</div>
<div class="st" style="left:1684px;font-size:12.77px">No selection</div>
<svg class="a" style="left:1760px;top:1380px" width="70" height="40">
 <path d="M10.8 19 V31.5 M27.2 19 V31.5 M10.8 25.2 H27.2" fill="none" stroke="#e8e8e8" stroke-width="1.1"/>
</svg>
<div class="st" style="left:1795.5px;font-size:12.5px">mm</div>
<div class="a" style="left:1826px;top:1392px;width:85px;height:28px;background:#29f2a4"></div>
<svg class="a" style="left:1826px;top:1392px" width="85" height="28">
 <path d="M18 13.5 C14.5 9 8.5 9 8.5 13.5 C8.5 18 14.5 18 18 13.5 C21.5 9 27.5 9 27.5 13.5 C27.5 18 21.5 18 18 13.5 Z" fill="none" stroke="#111" stroke-width="1.5"/>
 <path d="M35.5 2.6 H77" stroke="#111" stroke-width="1.1"/>
</svg>
<div class="a" style="left:1861.5px;top:1394.5px;font-family:'Liberation Mono',monospace;font-size:9.8px;line-height:10px;color:#1b1b1b">Overrun</div>
<div class="a" style="left:1865.5px;top:1406px;font-family:'Liberation Mono',monospace;font-size:11px;line-height:11px;color:#1b1b1b">$0.00</div>
<div class="st" style="left:1926.5px;font-size:13px;color:#d8d8d8">?</div>

</body></html>
